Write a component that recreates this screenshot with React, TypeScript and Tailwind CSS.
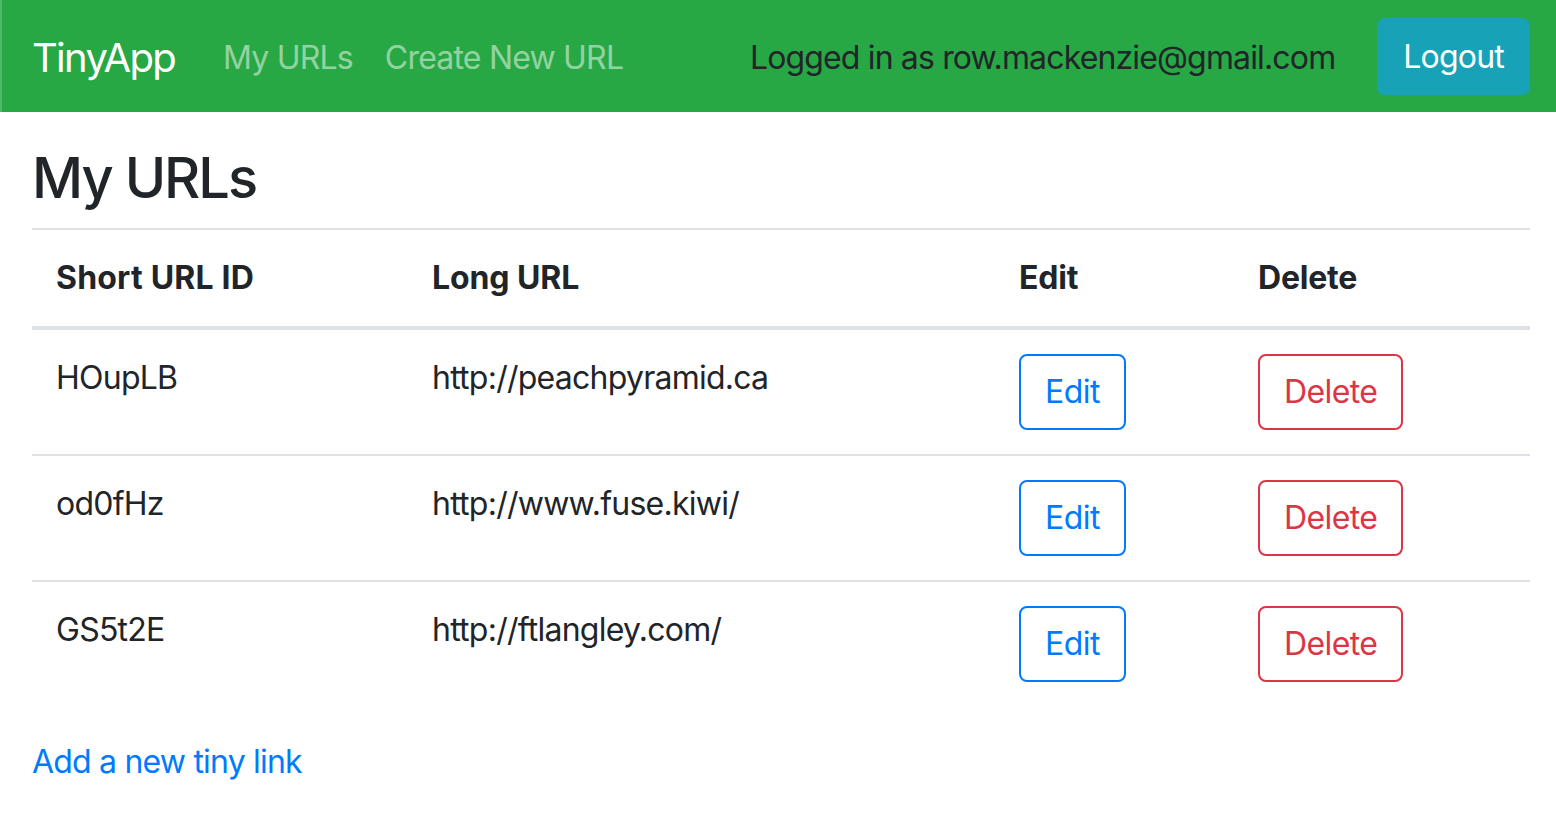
import React from "react";

const rows = [
  { id: "HOupLB", url: "http://peachpyramid.ca" },
  { id: "od0fHz", url: "http://www.fuse.kiwi/" },
  { id: "GS5t2E", url: "http://ftlangley.com/" },
];

export default function App() {
  return (
    <div
      className="min-h-[828px] bg-white text-[#212529] text-[32px] leading-[48px]"
      style={{ fontFamily: "Inter, 'Noto Sans', 'Liberation Sans', sans-serif" }}
    >
      <nav className="flex h-[112px] items-center bg-[#28a745] border-l-[2px] border-[#4fb866] pl-[30px] pr-[26px]">
        <span className="pt-[4px] text-[40px] leading-[60px] text-white mr-[32px] tracking-[-1.7px]">TinyApp</span>
        <span className="pt-[4px] px-[16px] text-[rgba(255,255,255,0.5)] tracking-[-0.8px]">My URLs</span>
        <span className="pt-[4px] px-[16px] text-[rgba(255,255,255,0.5)] tracking-[-0.8px]">Create New URL</span>
        <div className="ml-auto flex items-center">
          <span className="pt-[4px] text-[#212529] mr-[42px] tracking-[-0.85px]">Logged in as row.mackenzie@gmail.com</span>
          <button className="h-[77px] rounded-[8px] bg-[#17a2b8] px-[24px] pt-[2px] text-white border-[2px] border-[#17a2b8] tracking-[-0.8px]">
            Logout
          </button>
        </div>
      </nav>

      <main className="pl-[32px] pr-[26px] pt-[33px]">
        <h3 className="text-[56px] leading-[67px] font-medium mb-[16px] tracking-[-2px]">My URLs</h3>
        <table className="w-full table-fixed border-collapse mb-[32px]">
          <colgroup>
            <col className="w-[376px]" />
            <col className="w-[587px]" />
            <col className="w-[239px]" />
            <col />
          </colgroup>
          <thead>
            <tr>
              <th className="text-left font-bold p-[24px] border-t-[2px] border-b-[4px] border-[#dee2e6] align-bottom tracking-[0.2px]">Short URL ID</th>
              <th className="text-left font-bold p-[24px] border-t-[2px] border-b-[4px] border-[#dee2e6] align-bottom tracking-[-0.1px]">Long URL</th>
              <th className="text-left font-bold p-[24px] border-t-[2px] border-b-[4px] border-[#dee2e6] align-bottom tracking-[-0.2px]">Edit</th>
              <th className="text-left font-bold p-[24px] border-t-[2px] border-b-[4px] border-[#dee2e6] align-bottom tracking-[-0.2px]">Delete</th>
            </tr>
          </thead>
          <tbody>
            {rows.map((r) => (
              <tr key={r.id}>
                <td className="p-[24px] border-t-[2px] border-[#dee2e6] align-top tracking-[-0.75px]">{r.id}</td>
                <td className="p-[24px] border-t-[2px] border-[#dee2e6] align-top tracking-[-0.75px]">{r.url}</td>
                <td className="p-[24px] border-t-[2px] border-[#dee2e6] align-top">
                  <button className="h-[76px] rounded-[8px] border-[2px] border-[#007bff] text-[#007bff] px-[24px] tracking-[-0.5px]">
                    Edit
                  </button>
                </td>
                <td className="p-[24px] border-t-[2px] border-[#dee2e6] align-top">
                  <button className="h-[76px] rounded-[8px] border-[2px] border-[#dc3545] text-[#dc3545] px-[24px] tracking-[-0.6px]">
                    Delete
                  </button>
                </td>
              </tr>
            ))}
          </tbody>
        </table>
        <a className="text-[#007bff] tracking-[-0.8px]" href="#">Add a new tiny link</a>
      </main>
    </div>
  );
}
